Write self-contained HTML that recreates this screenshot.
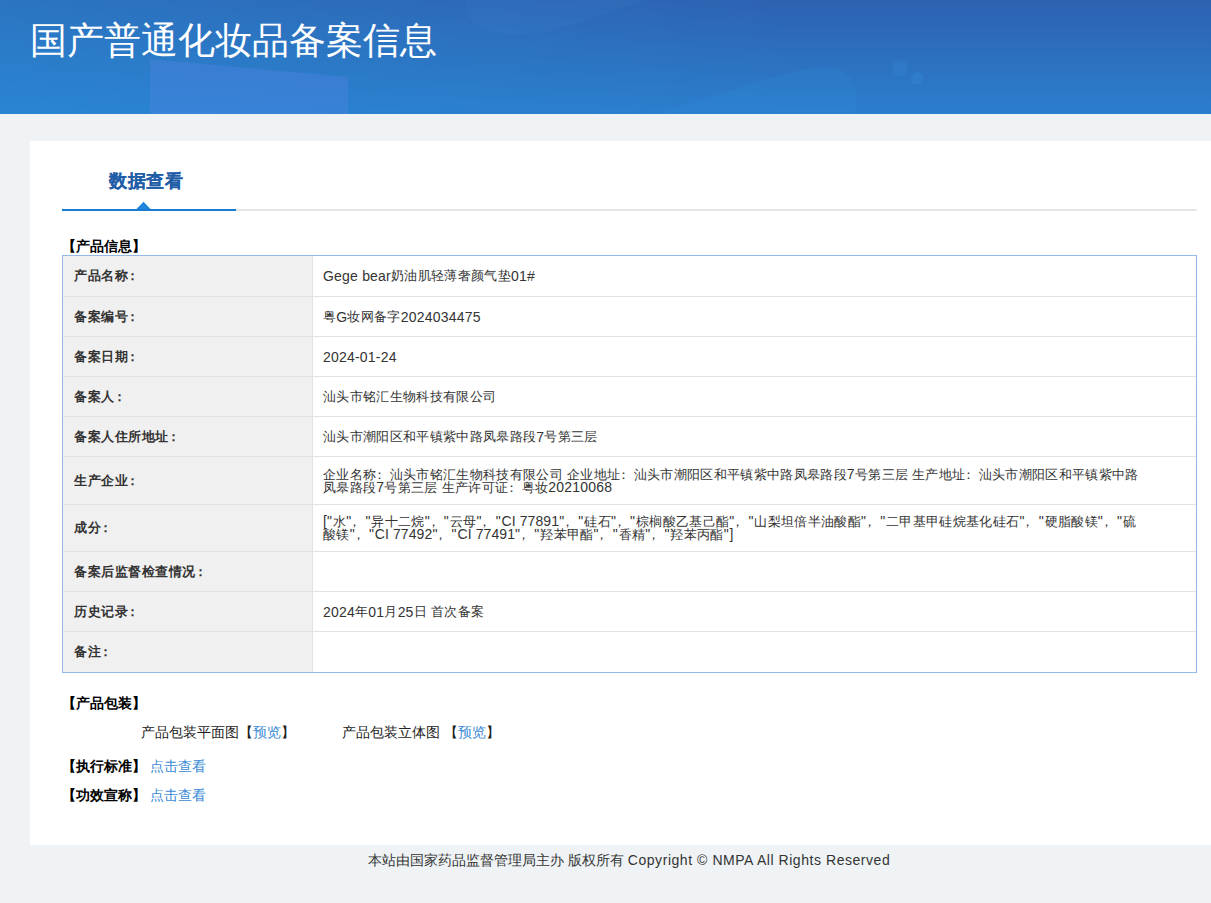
<!DOCTYPE html>
<html><head><meta charset="utf-8">
<style>
*{margin:0;padding:0;box-sizing:border-box}
html,body{width:1211px;height:903px;overflow:hidden}
body{background:#eff3f6;font-family:"Liberation Sans",sans-serif;color:#333;position:relative}
.hdr{position:absolute;left:0;top:0;width:1211px;height:114px;overflow:hidden;
 }
.hdr .t{position:absolute;left:30px;top:19px;font-size:37px;line-height:44px;color:#fff;white-space:nowrap}
.card{position:absolute;left:30px;top:141px;width:1181px;height:704px;background:#fff}
.tabt{position:absolute;left:109px;top:169px;font-size:18px;letter-spacing:.5px;line-height:24px;font-weight:bold;color:#1f5da7;-webkit-text-stroke:.15px #1f5da7;white-space:nowrap}
.gline{position:absolute;left:62px;top:209px;width:1135px;height:2px;background:#e6e6e6}
.bline{position:absolute;left:62px;top:209px;width:174px;height:2px;background:#1a7bd3}
.tri{position:absolute;left:137px;top:202px;width:0;height:0;border-left:6.5px solid transparent;border-right:6.5px solid transparent;border-bottom:7px solid #1f80d8}
.sec{position:absolute;font-size:14px;line-height:18px;font-weight:bold;color:#000;white-space:nowrap}
.tbl{position:absolute;left:62px;top:255px;width:1135px;height:418px;border:1px solid #94b8e8;background:#fff}
.row{position:relative;border-top:1px solid #e3e3e3;display:flex}
.row:first-child{border-top:none}
.lab{width:250px;background:#f0f0f0;border-right:1px solid #e3e3e3;font-weight:bold;font-size:13px;letter-spacing:.5px;padding-left:11px;display:flex;align-items:center;white-space:nowrap;color:#333}
.val{flex:1;font-size:13px;letter-spacing:.33px;padding-left:10px;display:flex;align-items:center;white-space:nowrap;color:#333}
.val .m{line-height:13px}
.l{font-size:14px;letter-spacing:.2px}
.r7 .l{letter-spacing:.1px}
.q{font-style:normal;letter-spacing:.9px}
.c,.k,.k2{font-style:normal;position:relative}
.c{left:-4px}.k{left:-3px}.k2{left:-2px}
.pk{position:absolute;font-size:14px;line-height:18px;white-space:nowrap;color:#222}
a,.lk{color:#3a8ad6;text-decoration:none}
.foot{position:absolute;left:368px;top:851px;font-size:14px;line-height:18px;white-space:nowrap;color:#333}
</style></head><body>
<div class="hdr">
 <svg width="1211" height="114" style="position:absolute;left:0;top:0">
  <defs>
   <linearGradient id="g1" x1="0" y1="0" x2="0" y2="1">
    <stop offset="0" stop-color="#2d62b1"/><stop offset="1" stop-color="#2b7ecd"/>
   </linearGradient>
   <linearGradient id="g2" x1="0" y1="0" x2="1" y2="0">
    <stop offset="0" stop-color="#2890da" stop-opacity=".4"/><stop offset=".65" stop-color="#2890da" stop-opacity="0"/>
   </linearGradient>
  </defs>
  <rect width="1211" height="114" fill="url(#g1)"/>
  <rect width="1211" height="114" fill="url(#g2)"/>
  <path d="M150,59 L348,77 L348,114 L150,114 Z" fill="#5a86e8" fill-opacity=".3"/>
  <path d="M467,0 C462,20 480,35 520,34 C560,33 600,15 646,0 Z" fill="#5a9ae6" fill-opacity=".08"/>
  <path d="M655,114 C720,95 780,72 820,67 C850,65 860,85 855,114 Z" fill="#3c9ae8" fill-opacity=".12"/>
  <circle cx="900" cy="68" r="8" fill="#3c95e6" fill-opacity=".18"/>
  <circle cx="917" cy="78" r="6" fill="#3c95e6" fill-opacity=".25"/>
 </svg>
 <div class="t">国产普通化妆品备案信息</div>
</div>
<div class="card"></div>
<div class="tabt">数据查看</div>
<div class="gline"></div>
<div class="bline"></div>
<svg style="position:absolute;left:130px;top:198px" width="28" height="14"><polygon points="6.5,11 13.5,3.8 20.5,11" fill="#1f86dc"/></svg>
<div class="sec" style="left:62px;top:237px">【产品信息】</div>
<div class="tbl">
 <div class="row first r1" style="height:40px"><div class="lab">产品名称<i class="k2">：</i></div><div class="val"><span class="l">Gege bear</span>奶油肌轻薄奢颜气垫<span class="l">01#</span></div></div>
 <div class="row r2" style="height:40px"><div class="lab">备案编号<i class="k2">：</i></div><div class="val">粤<span class="l">G</span>妆网备字<span class="l">2024034475</span></div></div>
 <div class="row r3" style="height:40px"><div class="lab">备案日期<i class="k2">：</i></div><div class="val"><span class="l">2024-01-24</span></div></div>
 <div class="row r4" style="height:40px"><div class="lab">备案人<i class="k2">：</i></div><div class="val">汕头市铭汇生物科技有限公司</div></div>
 <div class="row r5" style="height:40px"><div class="lab">备案人住所地址<i class="k2">：</i></div><div class="val">汕头市潮阳区和平镇紫中路凤皋路段<span class="l">7</span>号第三层</div></div>
 <div class="row r6" style="height:48px"><div class="lab">生产企业<i class="k2">：</i></div><div class="val"><div class="m">企业名称<i class="k">：</i>汕头市铭汇生物科技有限公司 企业地址<i class="k">：</i>汕头市潮阳区和平镇紫中路凤皋路段<span class="l">7</span>号第三层 生产地址<i class="k">：</i>汕头市潮阳区和平镇紫中路<br>凤皋路段<span class="l">7</span>号第三层 生产许可证<i class="k">：</i>粤妆<span class="l">20210068</span></div></div></div>
 <div class="row r7" style="height:47px"><div class="lab">成分<i class="k2">：</i></div><div class="val"><div class="m"><span class="l">[<i class="q">"</i></span>水<span class="l"><i class="q">"</i></span><i class="c">，</i><span class="l"><i class="q">"</i></span>异十二烷<span class="l"><i class="q">"</i></span><i class="c">，</i><span class="l"><i class="q">"</i></span>云母<span class="l"><i class="q">"</i></span><i class="c">，</i><span class="l"><i class="q">"</i>CI 77891<i class="q">"</i></span><i class="c">，</i><span class="l"><i class="q">"</i></span>硅石<span class="l"><i class="q">"</i></span><i class="c">，</i><span class="l"><i class="q">"</i></span>棕榈酸乙基己酯<span class="l"><i class="q">"</i></span><i class="c">，</i><span class="l"><i class="q">"</i></span>山梨坦倍半油酸酯<span class="l"><i class="q">"</i></span><i class="c">，</i><span class="l"><i class="q">"</i></span>二甲基甲硅烷基化硅石<span class="l"><i class="q">"</i></span><i class="c">，</i><span class="l"><i class="q">"</i></span>硬脂酸镁<span class="l"><i class="q">"</i></span><i class="c">，</i><span class="l"><i class="q">"</i></span>硫<br>酸镁<span class="l"><i class="q">"</i></span><i class="c">，</i><span class="l"><i class="q">"</i>CI 77492<i class="q">"</i></span><i class="c">，</i><span class="l"><i class="q">"</i>CI 77491<i class="q">"</i></span><i class="c">，</i><span class="l"><i class="q">"</i></span>羟苯甲酯<span class="l"><i class="q">"</i></span><i class="c">，</i><span class="l"><i class="q">"</i></span>香精<span class="l"><i class="q">"</i></span><i class="c">，</i><span class="l"><i class="q">"</i></span>羟苯丙酯<span class="l"><i class="q">"</i>]</span></div></div></div>
 <div class="row r8" style="height:40px"><div class="lab">备案后监督检查情况<i class="k2">：</i></div><div class="val"></div></div>
 <div class="row r9" style="height:40px"><div class="lab">历史记录<i class="k2">：</i></div><div class="val"><span class="l">2024</span>年<span class="l">01</span>月<span class="l">25</span>日 首次备案</div></div>
 <div class="row r10" style="height:41px"><div class="lab">备注<i class="k2">：</i></div><div class="val"></div></div>
</div>
<div class="sec" style="left:62px;top:694px">【产品包装】</div>
<div class="pk" style="left:141px;top:723px">产品包装平面图【<span class="lk">预览</span>】</div>
<div class="pk" style="left:342px;top:723px">产品包装立体图 【<span class="lk">预览</span>】</div>
<div class="sec" style="left:62px;top:757px">【执行标准】 <span class="lk" style="font-weight:normal">点击查看</span></div>
<div class="sec" style="left:62px;top:786px">【功效宣称】 <span class="lk" style="font-weight:normal">点击查看</span></div>
<div class="foot">本站由国家药品监督管理局主办 版权所有 <span style="letter-spacing:.55px">Copyright © NMPA All Rights Reserved</span></div>
</body></html>
